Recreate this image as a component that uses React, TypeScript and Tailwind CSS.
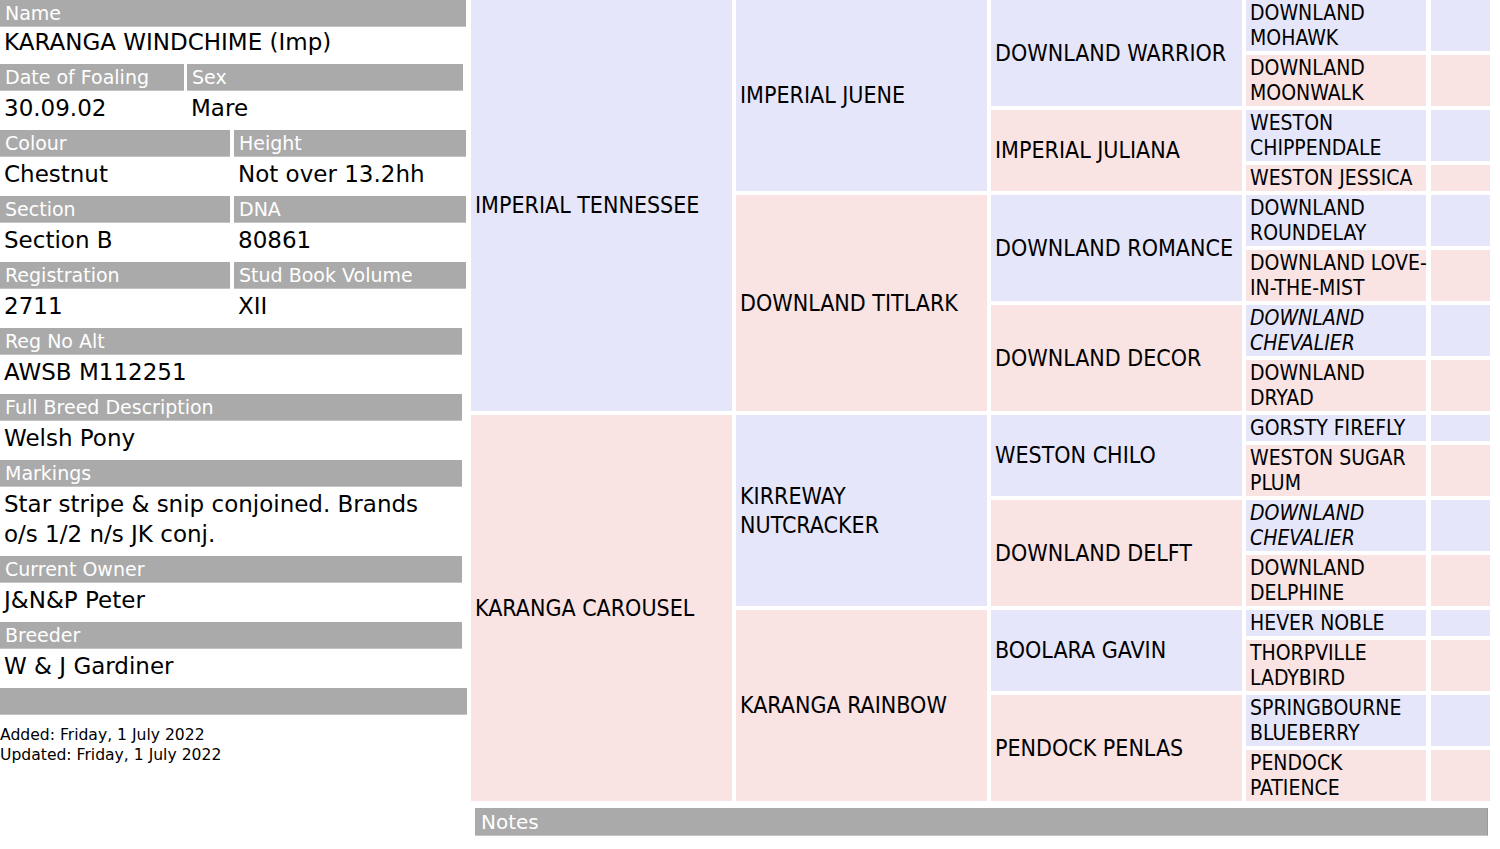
import React from "react";

type Horse = { name: string; italic?: boolean; sire?: Horse; dam?: Horse };

const h = (name: string, sire?: Horse, dam?: Horse, italic?: boolean): Horse => ({ name, sire, dam, italic });

const pedigree: Horse[] = [
  h(
    "IMPERIAL TENNESSEE",
    h(
      "IMPERIAL JUENE",
      h("DOWNLAND WARRIOR", h("DOWNLAND\nMOHAWK"), h("DOWNLAND\nMOONWALK")),
      h("IMPERIAL JULIANA", h("WESTON\nCHIPPENDALE"), h("WESTON JESSICA"))
    ),
    h(
      "DOWNLAND TITLARK",
      h("DOWNLAND ROMANCE", h("DOWNLAND\nROUNDELAY"), h("DOWNLAND LOVE-\nIN-THE-MIST")),
      h("DOWNLAND DECOR", h("DOWNLAND\nCHEVALIER", undefined, undefined, true), h("DOWNLAND\nDRYAD"))
    )
  ),
  h(
    "KARANGA CAROUSEL",
    h(
      "KIRREWAY\nNUTCRACKER",
      h("WESTON CHILO", h("GORSTY FIREFLY"), h("WESTON SUGAR\nPLUM")),
      h("DOWNLAND DELFT", h("DOWNLAND\nCHEVALIER", undefined, undefined, true), h("DOWNLAND\nDELPHINE"))
    ),
    h(
      "KARANGA RAINBOW",
      h("BOOLARA GAVIN", h("HEVER NOBLE"), h("THORPVILLE\nLADYBIRD")),
      h("PENDOCK PENLAS", h("SPRINGBOURNE\nBLUEBERRY"), h("PENDOCK\nPATIENCE"))
    )
  ),
];

const widths = [
  "w-[261px] text-[23px] leading-[29px]",
  "w-[251px] text-[23px] leading-[29px]",
  "w-[251px] text-[23px] leading-[29px]",
  "w-[180px] text-[21px] leading-[25px] py-[0.5px]",
];

function Branch({ horse, gen, dam }: { horse: Horse; gen: number; dam: boolean }) {
  const bg = dam ? "bg-[#f9e3e3]" : "bg-[#e6e6fa]";
  return (
    <div className="flex flex-1 gap-1">
      <div
        className={`${widths[gen]} ${bg} shrink-0 flex items-center px-1 whitespace-pre ${horse.italic ? "italic" : ""}`}
      >
        {horse.name}
      </div>
      {horse.sire && horse.dam ? (
        <div className="flex flex-1 flex-col gap-1">
          <Branch horse={horse.sire} gen={gen + 1} dam={false} />
          <Branch horse={horse.dam} gen={gen + 1} dam={true} />
        </div>
      ) : (
        <div className={`w-[59px] ml-px ${bg}`}></div>
      )}
    </div>
  );
}

function Head({ children, className = "" }: { children?: React.ReactNode; className?: string }) {
  return (
    <div className={`h-[27px] bg-[#aaaaaa] border-b border-[#c4c4c4] text-white text-[19px] leading-[26px] pl-[5px] ${className}`}>
      {children}
    </div>
  );
}

function Field({ label, value, w = "w-[462px]", top = "mt-[2px]" }: { label: string; value: string; w?: string; top?: string }) {
  return (
    <div className="mb-[7px]">
      <Head className={w}>{label}</Head>
      <div className={`${top} pl-1 text-[23px] leading-[30px] whitespace-pre-line`}>{value}</div>
    </div>
  );
}

function Pair({
  a,
  b,
  av,
  bv,
  aw,
  bw,
}: {
  a: string;
  b: string;
  av: string;
  bv: string;
  aw: string;
  bw: string;
}) {
  return (
    <div className="mb-[7px] flex">
      <div className={aw}>
        <Head>{a}</Head>
        <div className="mt-[2px] pl-1 text-[23px] leading-[30px]">{av}</div>
      </div>
      <div className={bw}>
        <Head>{b}</Head>
        <div className="mt-[2px] pl-1 text-[23px] leading-[30px]">{bv}</div>
      </div>
    </div>
  );
}

export default function App() {
  return (
    <div className="w-[1500px] h-[849px] bg-white text-black overflow-hidden flex">
      <div className="w-[467px] shrink-0 font-['DejaVu_Sans',Verdana,sans-serif]">
        <Field label="Name" value="KARANGA WINDCHIME (Imp)" w="w-[466px]" top="mt-0" />
        <Pair a="Date of Foaling" b="Sex" av="30.09.02" bv="Mare" aw="w-[184px] mr-[3px]" bw="w-[276px]" />
        <Pair a="Colour" b="Height" av="Chestnut" bv="Not over 13.2hh" aw="w-[230px] mr-1" bw="w-[232px]" />
        <Pair a="Section" b="DNA" av="Section B" bv="80861" aw="w-[230px] mr-1" bw="w-[232px]" />
        <Pair a="Registration" b="Stud Book Volume" av="2711" bv="XII" aw="w-[230px] mr-1" bw="w-[232px]" />
        <Field label="Reg No Alt" value="AWSB M112251" />
        <Field label="Full Breed Description" value="Welsh Pony" />
        <Field label="Markings" value={"Star stripe & snip conjoined. Brands\no/s 1/2 n/s JK conj."} />
        <Field label="Current Owner" value="J&N&P Peter" />
        <Field label="Breeder" value="W & J Gardiner" />
        <Head className="w-[467px]" />
        <div className="mt-[10px] text-[15.6px] leading-[20px]">
          <div>Added: Friday, 1 July 2022</div>
          <div>Updated: Friday, 1 July 2022</div>
        </div>
      </div>

      <div className="w-[1024px] pl-1 font-['DejaVu_Sans_Condensed','DejaVu_Sans',sans-serif] text-black">
        <div className="flex flex-col gap-1">
          <Branch horse={pedigree[0]} gen={0} dam={false} />
          <Branch horse={pedigree[1]} gen={0} dam={true} />
        </div>
        <div className="mt-[7px] ml-1 w-[1013px] h-[28px] bg-[#aaaaaa] border-b border-[#c4c4c4] border-r border-r-[#999999] text-white text-[20px] leading-[28px] pl-[6px] font-['DejaVu_Sans',Verdana,sans-serif]">
          Notes
        </div>
      </div>
    </div>
  );
}
